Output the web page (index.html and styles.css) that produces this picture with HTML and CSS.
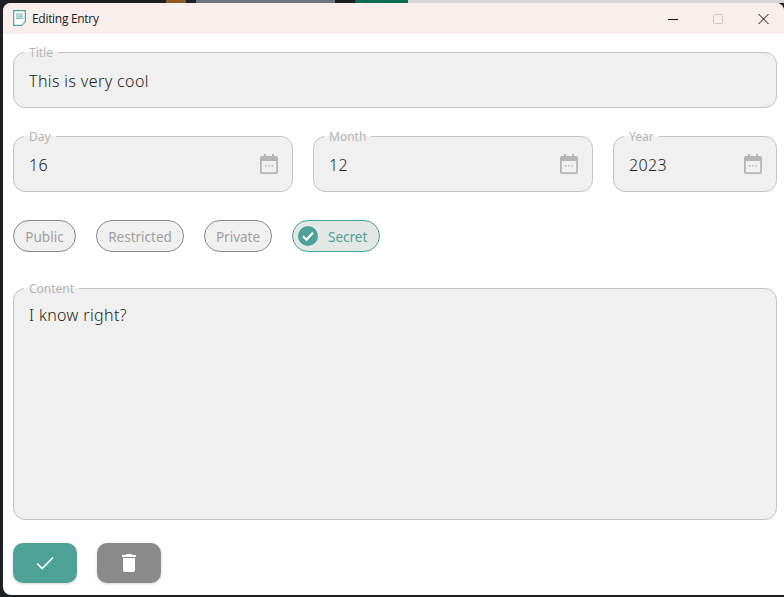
FILE: index.html
```html
<!DOCTYPE html>
<html lang="en">
<head>
<meta charset="utf-8">
<title>Editing Entry</title>
<link rel="stylesheet" href="styles.css">
</head>
<body>
<div class="desktop">
  <div class="window">
    <header class="titlebar">
      <svg class="app-icon" width="13" height="16" viewBox="0 0 13 16"><path d="M.7.7h11.600v10.800L8.800 15.300H.7z" fill="#fff" stroke="#4da197" stroke-width="1.200"/><path d="M3 4h7M3 6.200h7M3 8.400h7" stroke="#6fb3ab" stroke-width="1.200"/><path d="M8.800 15.300v-3.800h3.500z" fill="#cfe5e2"/></svg>
      <span class="app-title">Editing Entry</span>
      <div class="win-controls">
        <svg class="win-btn" width="12" height="12" viewBox="0 0 12 12"><path d="M1 6.500h10" stroke="#111" stroke-width="1"/></svg>
        <svg class="win-btn" width="12" height="12" viewBox="0 0 12 12"><rect x="1.500" y="1.500" width="9" height="9" rx="1" fill="none" stroke="#c9c6c5"/></svg>
        <svg class="win-btn" width="12" height="12" viewBox="0 0 12 12"><path d="M1.500 1l10 10M11.500 1l-10 10" stroke="#111" stroke-width="1"/></svg>
      </div>
    </header>
    <main class="content">
      <div class="field field-title">
        <span class="legend">Title</span>
        <span class="value">This is very cool</span>
      </div>
      <div class="date-row">
        <div class="field date-wide">
          <span class="legend">Day</span>
          <span class="value">16</span>
          <svg class="cal" width="18" height="20" viewBox="0 0 18 20"><path d="M4 0h2v2h6V0h2v2h2a2 2 0 0 1 2 2v14a2 2 0 0 1-2 2H2a2 2 0 0 1-2-2V4a2 2 0 0 1 2-2h2zM1.800 7v10.200a1 1 0 0 0 1 1h12.400a1 1 0 0 0 1-1V7zM5 11h1.500v1.500H5zM8.300 11h1.500v1.500H8.300zM11.500 11H13v1.500h-1.500z" fill="#b5b5b5" fill-rule="evenodd"/></svg>
        </div>
        <div class="field date-wide">
          <span class="legend">Month</span>
          <span class="value">12</span>
          <svg class="cal" width="18" height="20" viewBox="0 0 18 20"><path d="M4 0h2v2h6V0h2v2h2a2 2 0 0 1 2 2v14a2 2 0 0 1-2 2H2a2 2 0 0 1-2-2V4a2 2 0 0 1 2-2h2zM1.800 7v10.200a1 1 0 0 0 1 1h12.400a1 1 0 0 0 1-1V7zM5 11h1.500v1.500H5zM8.300 11h1.500v1.500H8.300zM11.500 11H13v1.500h-1.500z" fill="#b5b5b5" fill-rule="evenodd"/></svg>
        </div>
        <div class="field date-narrow">
          <span class="legend">Year</span>
          <span class="value">2023</span>
          <svg class="cal" width="18" height="20" viewBox="0 0 18 20"><path d="M4 0h2v2h6V0h2v2h2a2 2 0 0 1 2 2v14a2 2 0 0 1-2 2H2a2 2 0 0 1-2-2V4a2 2 0 0 1 2-2h2zM1.800 7v10.200a1 1 0 0 0 1 1h12.400a1 1 0 0 0 1-1V7zM5 11h1.500v1.500H5zM8.300 11h1.500v1.500H8.300zM11.500 11H13v1.500h-1.500z" fill="#b5b5b5" fill-rule="evenodd"/></svg>
        </div>
      </div>
      <div class="chips">
        <span class="chip chip-public"><span class="chip-text">Public</span></span>
        <span class="chip chip-restricted"><span class="chip-text">Restricted</span></span>
        <span class="chip chip-private"><span class="chip-text">Private</span></span>
        <span class="chip chip-on">
          <svg class="chip-check" width="20" height="20" viewBox="0 0 20 20"><circle cx="10" cy="10" r="10" fill="#4da197"/><path d="M5 10.200l3.500 3.500 6.500-7" fill="none" stroke="#fff" stroke-width="2.200"/></svg>
          <span class="chip-text">Secret</span>
        </span>
      </div>
      <div class="field field-content">
        <span class="legend">Content</span>
        <span class="value">I know right?</span>
      </div>
      <div class="actions">
        <button class="action action-save" type="button" aria-label="Save">
          <svg width="18" height="14" viewBox="0 0 18 14"><path d="M1.200 7.500l5 5L17 1.500" fill="none" stroke="#fff" stroke-width="1.700"/></svg>
        </button>
        <button class="action action-delete" type="button" aria-label="Delete">
          <svg width="14" height="18" viewBox="0 0 14 18"><path d="M4.500 0h5l1 1H14v2H0V1h3.500zM1 4h12v12a2 2 0 0 1-2 2H3a2 2 0 0 1-2-2z" fill="#fff"/></svg>
        </button>
      </div>
    </main>
  </div>
</div>
</body>
</html>
```
FILE: styles.css
```css
* { box-sizing: border-box; }
html, body { margin: 0; padding: 0; }
body { width: 784px; height: 597px; overflow: hidden; font-family: "Noto Sans", "Open Sans", sans-serif; }
.desktop { position: relative; width: 784px; height: 597px; overflow: hidden; background-color: #1f2023; background-image: linear-gradient(90deg, #1f2023 0 166px, #8a5a20 166px 186px, #1f2023 186px 196px, #6c747c 196px 335px, #1f2023 335px 355px, #0c6b55 355px 408px, #d6d6d6 408px); background-size: 100% 3px; background-repeat: no-repeat; }
.window { position: absolute; left: 3px; top: 3px; width: 781px; height: 592px; background: #fff; border-radius: 8px 8px 0 8px; display: flex; flex-direction: column; overflow: hidden; }
.titlebar { height: 31px; flex: none; background: #f8efed; display: flex; align-items: center; padding-left: 10px; }
.app-icon { flex: none; margin-top: -1px; }
.app-title { margin-left: 6px; font-family: "Open Sans", "Noto Sans", sans-serif; font-size: 12px; letter-spacing: -0.3px; color: #1a1a1a; }
.win-controls { margin-left: auto; display: flex; align-items: center; gap: 33px; padding-right: 15px; }
.win-btn { display: block; }
.content { flex: 1; padding: 18px 7px 0 10px; display: flex; flex-direction: column; }
.field { position: relative; background: #f0f0f0; border: 1px solid #c4c4c4; border-radius: 12px; color: #222; font-size: 16px; padding: 0 15px; display: flex; align-items: center; }
.legend { position: absolute; left: 10px; top: -8px; padding: 0 5px; font-size: 12px; line-height: 16px; color: #b4b4b4; background: linear-gradient(#fff 0 7px, #f0f0f0 7px); }
.value { line-height: 22px; font-weight: 300; letter-spacing: 0.38px; position: relative; top: 1px; }
.field-title { height: 56px; }
.date-row { margin-top: 28px; display: flex; gap: 20px; }
.date-wide { width: 280px; height: 56px; }
.date-narrow { width: 164px; height: 56px; }
.cal { position: absolute; right: 14px; top: 17px; }
.chips { margin-top: 28px; display: flex; gap: 20px; height: 32px; }
.chip { height: 32px; padding: 0; border: 1px solid #8a8a8a; border-radius: 16px; background: #f0f0f0; color: #a0a0a0; font-size: 13.5px; display: flex; align-items: center; justify-content: center; }
.chip-text { position: relative; top: 1px; }
.chip-public { width: 63px; }
.chip-restricted { width: 88px; }
.chip-private { width: 68px; }
.chip-on { width: 88px; justify-content: flex-start; padding-left: 5px; border-color: #4da197; background: #e3e7e6; color: #4da197; }
.chip-check { margin-right: 10px; flex: none; }
.field-content { margin-top: 36px; height: 232px; align-items: flex-start; padding-top: 14px; }
.actions { margin-top: 23px; display: flex; gap: 20px; }
.action { width: 64px; height: 40px; border: 0; border-radius: 10px; display: flex; align-items: center; justify-content: center; padding: 0; box-shadow: 0 1px 3px rgba(0,0,0,.18); }
.action-save { background: #4da197; }
.action-delete { background: #8a8a8a; }
```
